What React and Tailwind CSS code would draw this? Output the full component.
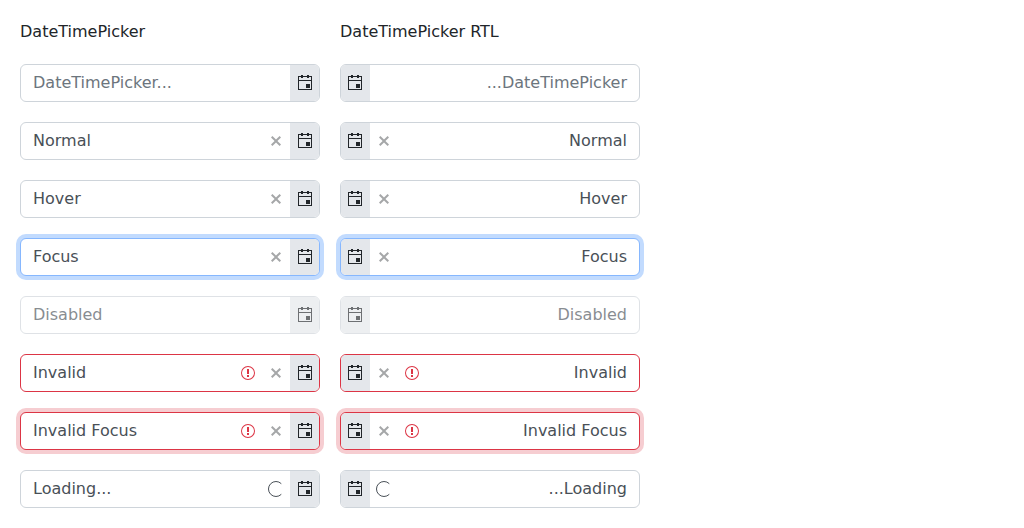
import React from "react";

const rows = [
  { label: "DateTimePicker...", rtlLabel: "...DateTimePicker", text: "text-[#6c757d]" },
  { label: "Normal", clear: true },
  { label: "Hover", clear: true },
  { label: "Focus", clear: true, box: "border-[#86b7fe] shadow-[0_0_0_4px_#c2dbfe]" },
  { label: "Disabled", box: "border-[#ced4da] opacity-65" },
  { label: "Invalid", clear: true, invalid: true, box: "border-[#dc3545]" },
  { label: "Invalid Focus", clear: true, invalid: true, box: "border-[#dc3545] shadow-[0_0_0_4px_#f6cdd1]" },
  { label: "Loading...", rtlLabel: "...Loading", loading: true },
];

function CalendarIcon() {
  return (
    <svg className="size-4 text-[#212529]" viewBox="0 0 16 16" fill="currentColor" shapeRendering="crispEdges">
      <path fillRule="evenodd" d="M1 1h14v14H1zM2 2v3h12V2zM2 6v8h12V6z" />
      <path d="M4 0h2v3H4zM10 0h2v3h-2zM9 9h4v4H9z" />
    </svg>
  );
}

function ClearIcon() {
  return (
    <svg className="size-4 text-[#212529] opacity-40" viewBox="0 0 16 16" fill="currentColor">
      <path d="M13 4.4 9.4 8l3.6 3.6-1.4 1.4L8 9.4 4.4 13 3 11.6 6.6 8 3 4.4 4.4 3 8 6.6 11.6 3z" />
    </svg>
  );
}

function InvalidIcon() {
  return (
    <svg className="size-4 text-[#dc3545]" viewBox="0 0 16 16" fill="currentColor">
      <path d="M8 2a6 6 0 1 1 0 12A6 6 0 0 1 8 2m0-1a7 7 0 1 0 0 14A7 7 0 0 0 8 1" />
      <path d="M7 4h2v5H7zM7 10h2v2H7z" />
    </svg>
  );
}

function LoadingIcon() {
  return (
    <svg className="size-4" viewBox="0 0 16 16" fill="none" stroke="#495057" strokeWidth="1">
      <path d="M13.3 2.7a7.5 7.5 0 1 0 0 10.6" />
    </svg>
  );
}

function Picker({ row, rtl }) {
  return (
    <div className={`flex h-[38px] w-[300px] overflow-hidden rounded-md border bg-white ${rtl ? "flex-row-reverse" : ""} ${row.box || "border-[#ced4da]"}`}>
      <div className={`min-w-0 flex-1 px-3 py-1.5 leading-6 ${rtl ? "text-right" : "text-left"} ${row.text || "text-[#495057]"}`}>
        {rtl ? row.rtlLabel || row.label : row.label}
      </div>
      <div className={`flex items-center gap-3 px-1.5 ${rtl ? "flex-row-reverse" : ""}`}>
        {row.invalid && <InvalidIcon />}
        {row.clear && <ClearIcon />}
        {row.loading && <LoadingIcon />}
      </div>
      <div className={`flex w-[29px] items-center bg-[#e4e7eb] ${rtl ? "pl-1.5" : "pl-[7px]"}`}>
        <CalendarIcon />
      </div>
    </div>
  );
}

export default function App() {
  return (
    <main className="flex h-[528px] w-full gap-5 overflow-hidden bg-white p-5 font-['DejaVu_Sans',sans-serif] text-base text-[#212529]">
      {[false, true].map((rtl) => (
        <section key={String(rtl)} className="flex w-[300px] flex-col gap-5">
          <h2 className="leading-6">{rtl ? "DateTimePicker RTL" : "DateTimePicker"}</h2>
          {rows.map((row) => (
            <Picker key={row.label} row={row} rtl={rtl} />
          ))}
        </section>
      ))}
    </main>
  );
}
